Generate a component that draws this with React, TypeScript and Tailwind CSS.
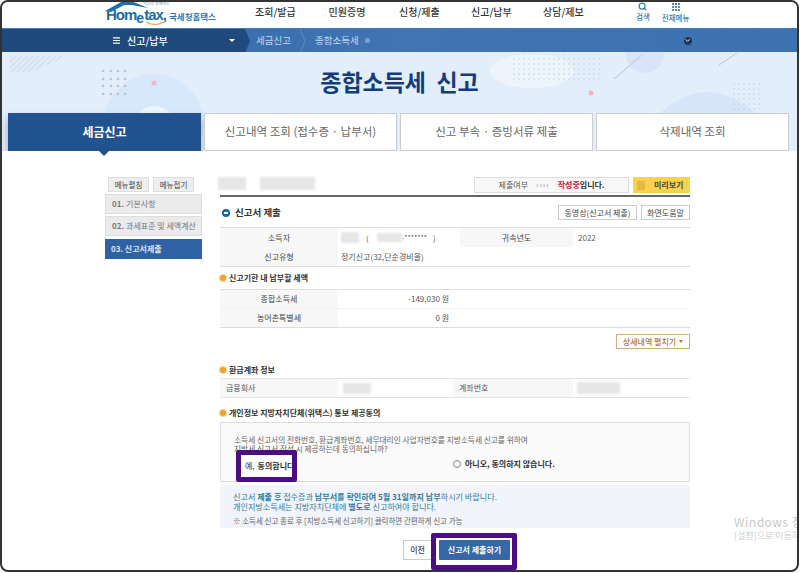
import { Search, Grip, ChevronDown, Menu } from "lucide-react";

const navItems = ["조회/발급", "민원증명", "신청/제출", "신고/납부", "상담/제보"];
const tabs = ["신고내역 조회 (접수증 · 납부서)", "신고 부속 · 증빙서류 제출", "삭제내역 조회"];

const Patch = ({ className }: { className: string }) => (
  <span className={"inline-block bg-[#e6e6e6] blur-[1px] " + className} />
);

const SubTitle = ({ children, className }: { children: string; className: string }) => (
  <div className={"flex items-center gap-[3px] text-[8px] font-bold leading-none text-[#333] " + className}>
    <span className="h-[6px] w-[6px] rounded-full bg-[#f0a12c] ring-1 ring-[#f8d79c]" />
    {children}
  </div>
);

const Label = ({ children, className }: { children: string; className: string }) => (
  <div className={"flex items-center justify-center bg-[#f7f7f7] text-[8px] text-[#444] " + className}>{children}</div>
);

const HeroDecor = () => (
  <svg className="absolute inset-0" width="800" height="100" viewBox="0 0 800 100">
    <defs>
      <pattern id="dots" width="5" height="5" patternUnits="userSpaceOnUse">
        <circle cx="2" cy="2" r="0.7" fill="#b9cbe2" />
      </pattern>
      <pattern id="stripes" width="4" height="4" patternUnits="userSpaceOnUse" patternTransform="rotate(45)">
        <rect width="1.5" height="4" fill="#d2dcea" />
      </pattern>
    </defs>
    <path d="M8 4H65L30 20H8Z" fill="url(#stripes)" />
    <circle cx="152" cy="72" r="50" fill="#d6e8fa" />
    <circle cx="152" cy="76" r="22" fill="#edf5fd" />
    <circle cx="212" cy="90" r="28" fill="none" stroke="#dbe8f5" />
    <circle cx="152" cy="31" r="2.5" fill="#eeb9c6" />
    {[101, 109, 116, 123].map((x) =>
      [19, 27, 34, 42].map((y) => <circle key={x + "-" + y} cx={x} cy={y} r="1.3" fill="#b5c4d8" />),
    )}
    <ellipse cx="530" cy="19" rx="42" ry="17" fill="#edf4fc" />
    <rect x="508" y="2" width="92" height="26" fill="url(#dots)" />
    <circle cx="643" cy="2" r="19" fill="#d9e4f8" />
    <path d="M612 27L641 2M717 13L735 1" stroke="#b9c3d8" />
    <circle cx="589" cy="41" r="2.5" fill="#f0b4c0" />
    <path d="M655 64C700 20 745 40 790 100H750C725 70 695 65 655 64Z" fill="#d6e6f8" />
    <rect x="730" y="30" width="30" height="30" fill="url(#dots)" />
  </svg>
);

const Logo = () => (
  <div className="relative ml-[104px] flex h-full w-[116px] items-start pt-[4px]">
    <svg className="absolute left-[-2px] top-[-3px]" width="60" height="14" viewBox="0 0 60 14">
      <path d="M1 12L19 2H27L44 9L28 6H20L7 13Z" fill="#1c6fb0" />
    </svg>
    <svg className="absolute left-[39px] top-[19px]" width="20" height="5" viewBox="0 0 20 5">
      <path d="M1 1Q10 6 19 1" fill="none" stroke="#e5a24a" strokeWidth="1.2" />
    </svg>
    <span className="absolute left-[37px] top-[-1px] whitespace-nowrap text-[4px] leading-[5px] text-[#5b8fb5]">국민과 함께하는</span>
    <span className="font-['Liberation_Sans',sans-serif] text-[15px] font-bold leading-[18px] tracking-[-1px] text-[#1a6ea8]">Hom</span>
    <span className="relative top-[3px] font-['Liberation_Sans',sans-serif] text-[14px] font-bold leading-[18px] text-[#1a6ea8]">e</span>
    <span className="font-['Liberation_Sans',sans-serif] text-[15px] font-bold leading-[18px] tracking-[-1px] text-[#1a6ea8]">tax,</span>
    <span className="ml-[3px] whitespace-nowrap text-[8.5px] font-bold leading-[20px] text-[#2d7cb5]">국세청홈택스</span>
  </div>
);

export default function App() {
  return (
    <div className="relative h-[572px] w-[799px] overflow-hidden rounded-lg border-2 border-[#333] bg-white font-['Noto_Sans_CJK_KR','Noto_Sans',sans-serif]">
      <header className="flex h-[26px] items-start bg-white">
        <Logo />
        <nav className="ml-[33px] flex gap-[32px] pt-[2px] text-[10px] font-medium leading-[16px] text-[#333]">
          {navItems.map((item) => (
            <span key={item} className="w-[40px] whitespace-nowrap text-center">
              {item}
            </span>
          ))}
        </nav>
        <div className="ml-[53px] flex gap-[12px] text-[7.5px] font-medium leading-[11px] text-[#2a7fb5]">
          <div className="flex flex-col items-center">
            <Search size={9} strokeWidth={3} className="text-[#2a7fb5]" />
            <span>검색</span>
          </div>
          <div className="flex flex-col items-center">
            <Grip size={10} strokeWidth={3} className="text-[#26608f]" />
            <span>전체메뉴</span>
          </div>
        </div>
      </header>

      <div className="flex h-[24px] items-center border-t border-[#3d7dbb] bg-gradient-to-r from-[#3568a5] via-[#3f75b5] to-[#3c72b0] text-white">
        <div className="flex h-full w-[243px] items-center bg-[#1f4a7e] pl-[110px]">
          <Menu size={9} strokeWidth={3} />
          <span className="ml-[6px] text-[10px] font-medium">신고/납부</span>
          <span className="ml-[61px] h-0 w-0 border-x-[3px] border-t-[3px] border-x-transparent border-t-white" />
        </div>
        <span className="h-0 w-0 border-y-[12px] border-l-[5px] border-y-transparent border-l-[#1f4a7e]" />
        <span className="ml-[6px] text-[9.5px] text-[#c3d6ec]">세금신고</span>
        <svg className="ml-[9px]" width="6" height="24" viewBox="0 0 6 24">
          <path d="M0 0L5 12L0 24" fill="none" stroke="#5b8ac2" />
        </svg>
        <span className="ml-[9px] text-[9.5px] text-[#c3d6ec]">종합소득세</span>
        <span className="ml-[6px] h-[5px] w-[5px] rounded-full bg-[#7fa3cd]" />
        <span className="ml-[314px] flex h-[8px] w-[8px] items-center justify-center rounded-full bg-[#1f3658]">
          <ChevronDown size={7} strokeWidth={3} />
        </span>
      </div>

      <section className="relative h-[99px] overflow-hidden bg-[#e3eefb]">
        <HeroDecor />
        <h1 className="relative pt-[12px] text-center text-[23px] font-bold leading-[34px] text-[#133d7a]">종합소득세&nbsp;&nbsp;신고</h1>
        <div className="relative mt-[15px] flex h-[38px] gap-[3px] pl-[6px]">
          <div className="flex w-[193px] items-center justify-center bg-[#23538f] text-[12px] font-bold text-white shadow-[0_5px_8px_rgba(0,0,0,0.3)]">
            세금신고
          </div>
          {tabs.map((tab) => (
            <div
              key={tab}
              className="flex w-[193px] items-center justify-center whitespace-nowrap border border-[#ccc] bg-white text-[11.5px] text-[#666]"
            >
              {tab}
            </div>
          ))}
        </div>
      </section>
      <div className="relative z-10 ml-[97px] h-0 w-0 border-x-[5px] border-t-[5px] border-x-transparent border-t-[#23538f]" />

      <main className="flex pl-[103px] pt-[21px]">
        <aside className="w-[97px] shrink-0 text-[8px]">
          <div className="flex gap-[4px] pl-[3px] text-[7.5px]">
            <span className="flex h-[15px] w-[41px] items-center justify-center border border-[#ddd] bg-[#eee] text-[#444]">메뉴펼침</span>
            <span className="flex h-[15px] w-[41px] items-center justify-center border border-[#ddd] bg-[#eee] text-[#444]">메뉴접기</span>
          </div>
          <div className="mt-[2px] flex h-[20px] items-center border border-[#ddd] bg-[#ebebeb] pl-[6px] text-[#777]">
            <b className="mr-[2px]">01.</b>기본사항
          </div>
          <div className="mt-[2px] flex h-[20px] items-center whitespace-nowrap border border-[#ddd] bg-[#ebebeb] pl-[6px] text-[#777]">
            <b className="mr-[2px]">02.</b>과세표준 및 세액계산
          </div>
          <div className="mt-[3px] flex h-[20px] items-center bg-[#2f62a4] pl-[6px] font-bold text-[#dbe6f3]">03. 신고서제출</div>
        </aside>

        <div className="ml-[18px] w-[470px] text-[8px] text-[#555]">
          <div className="flex h-[18px] items-start justify-between">
            <div className="-ml-[2px] flex gap-[14px]">
              <Patch className="h-[13px] w-[28px]" />
              <Patch className="h-[13px] w-[55px]" />
            </div>
            <div className="flex gap-[4px]">
              <div className="flex h-[16px] w-[155px] items-center justify-center gap-[8px] border border-[#ddd] bg-[#f8f8f8] text-[#555]">
                <span>제출여부</span>
                <span className="tracking-[1px] text-[#888]">››››</span>
                <span className="font-bold text-[#333]">
                  <span className="text-[#c2213a]">작성중</span>입니다.
                </span>
              </div>
              <div className="flex h-[16px] w-[57px] items-center gap-[9px] bg-[#f8d24f] pl-[4px] font-bold text-[#444]">
                <span className="h-[9px] w-[8px] bg-[#e3b93f]" />
                미리보기
              </div>
            </div>
          </div>
          <div className="h-[2px] bg-[#666]" />

          <div className="flex h-[30px] items-center justify-between pt-[1px]">
            <div className="flex items-center gap-[5px] pl-[2px] text-[9.5px] font-bold text-[#333]">
              <span className="flex h-[8px] w-[8px] items-center justify-center rounded-full bg-[#1769a6]">
                <span className="h-[2px] w-[4px] bg-white" />
              </span>
              신고서 제출
            </div>
            <div className="flex gap-[4px] text-[#444]">
              <span className="flex h-[15px] w-[79px] items-center justify-center border border-[#ccc] bg-white">동영상(신고서 제출)</span>
              <span className="flex h-[15px] w-[49px] items-center justify-center border border-[#ccc] bg-white">화면도움말</span>
            </div>
          </div>

          <div className="border-y border-[#ddd]">
            <div className="flex h-[19px]">
              <Label className="w-[118px]">소득자</Label>
              <div className="flex w-[122px] items-center pl-[3px]">
                <Patch className="h-[11px] w-[18px]" />
                <span className="ml-[7px]">(</span>
                <Patch className="ml-[8px] h-[9px] w-[25px]" />
                <span className="text-[7px]">-*******</span>
                <span className="ml-[6px]">)</span>
              </div>
              <Label className="w-[113px]">귀속년도</Label>
              <div className="flex items-center pl-[5px] text-[#666]">2022</div>
            </div>
            <div className="flex h-[19px]">
              <Label className="w-[118px]">신고유형</Label>
              <div className="flex items-center pl-[3px] text-[#555]">정기신고(32,단순경비율)</div>
            </div>
          </div>

          <SubTitle className="h-[22px]">신고기한 내 납부할 세액</SubTitle>
          <div className="border-y border-[#ddd]">
            <div className="flex h-[19px] border-b border-[#f2f2f2]">
              <Label className="w-[118px]">종합소득세</Label>
              <div className="flex w-[111px] items-center justify-end text-[#555]">-149,030 원</div>
            </div>
            <div className="flex h-[18px]">
              <Label className="w-[118px]">농어촌특별세</Label>
              <div className="flex w-[111px] items-center justify-end text-[#555]">0 원</div>
            </div>
          </div>

          <div className="mt-[6px] flex justify-end">
            <span className="flex h-[15px] w-[74px] items-center justify-center gap-[3px] border border-[#d7ab78] bg-white font-medium text-[#b0763c]">
              상세내역 펼치기
              <span className="h-0 w-0 border-x-[2px] border-t-[3px] border-x-transparent border-t-[#b0763c]" />
            </span>
          </div>

          <SubTitle className="mt-[15px] h-[12px]">환급계좌 정보</SubTitle>
          <div className="mt-[2px] flex h-[20px] border-y border-[#e4e4e4] text-[#555]">
            <div className="flex w-[118px] items-center bg-[#f7f7f7] pl-[6px]">금융회사</div>
            <div className="flex w-[115px] items-center pl-[5px]">
              <Patch className="h-[11px] w-[28px]" />
            </div>
            <div className="flex w-[120px] items-center bg-[#f7f7f7] pl-[6px]">계좌번호</div>
            <div className="flex items-center pl-[4px]">
              <Patch className="h-[12px] w-[43px]" />
            </div>
          </div>

          <SubTitle className="mt-[9px] h-[12px]">개인정보 지방자치단체(위택스) 통보 제공동의</SubTitle>
          <div className="mt-[3px] h-[60px] rounded-[1px] border border-[#ddd] bg-[#fafafa] pl-[13px] pt-[12px] text-[7.7px] leading-[9px] text-[#666]">
            <p className="whitespace-nowrap">소득세 신고서의 전화번호, 환급계좌번호, 세무대리인 사업자번호를 지방소득세 신고를 위하여</p>
            <p className="whitespace-nowrap">지방세 신고서 작성 시 제공하는데 동의하십니까?</p>
            <div className="mt-[6px] flex items-center text-[8px] font-bold text-[#333]">
              <span className="w-[219px]" />
              <span className="mr-[4px] h-[8px] w-[8px] rounded-full border border-[#888] bg-white" />
              아니오, 동의하지 않습니다.
            </div>
          </div>
          <div className="mt-[3px] h-[43px] bg-[#f1f5fb] pl-[13px] pt-[7px] text-[8.1px] leading-[10px] text-[#2f7a9e]">
            <p className="whitespace-nowrap">
              신고서 <b>제출 후</b> 접수증과 <b>납부서를 확인하여 5월 31일까지 납부</b>하시기 바랍니다.
            </p>
            <p className="whitespace-nowrap">
              개인지방소득세는 지방자치단체에 <b>별도로</b> 신고하여야 합니다.
            </p>
            <p className="mt-[4px] whitespace-nowrap text-[7.5px] text-[#666]">※ 소득세 신고 종료 후 [지방소득세 신고하기] 클릭하면 간편하게 신고 가능</p>
          </div>
          <div className="mt-[12px] flex gap-[7px] pl-[183px]">
            <span className="flex h-[20px] w-[29px] items-center justify-center border border-[#ccc] bg-white font-medium text-[#444]">이전</span>
            <span className="flex h-[20px] w-[71px] items-center justify-center rounded-[1px] bg-[#3568a8] font-bold text-white">신고서 제출하기</span>
          </div>
        </div>
      </main>

      {/* 보라색 강조 박스 */}
      <div className="absolute left-[234px] top-[448px] flex h-[32px] w-[61px] items-center overflow-hidden rounded-[2px] border-[5px] border-[#4a0e82] bg-white pl-[4px] text-[8px] font-bold text-[#333]">
        <span className="mr-[3px] font-normal">예,</span>
        <span className="whitespace-nowrap">동의합니다</span>
      </div>
      <div className="absolute left-[429px] top-[531px] h-[37px] w-[86px] rounded-[2px] border-[5px] border-[#4a0e82]" />

      {/* 정품 인증 워터마크 */}
      <div className="absolute left-[732px] top-[513px] whitespace-nowrap text-[12px] leading-[14px] tracking-[0.5px] text-[#c9c9c9]">Windows 정품 인증</div>
      <div className="absolute left-[732px] top-[528px] whitespace-nowrap text-[9px] leading-[12px] text-[#cfcfcf]">[설정]으로 이동하여</div>
    </div>
  );
}
